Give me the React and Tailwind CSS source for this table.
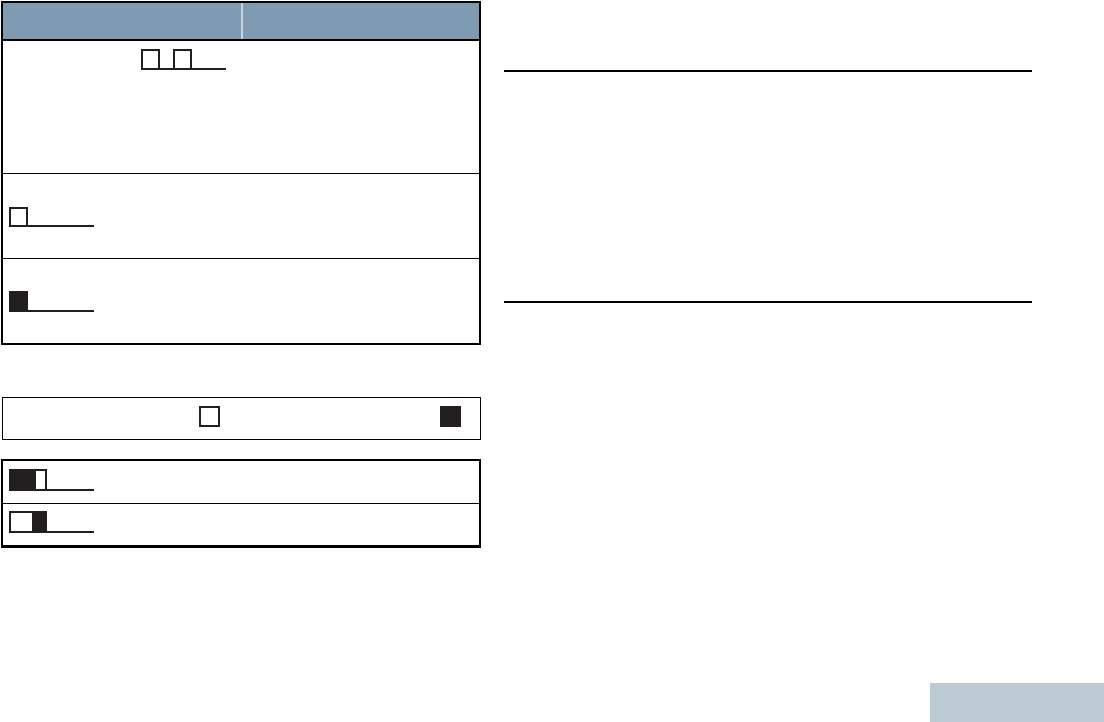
const INK = "border-[#231f20]";

const Underlined = ({ children }) => (
  <div className={`flex items-end w-[85px] border-b-2 ${INK}`}>{children}</div>
);

const Empty = ({ h = "h-[18px]" }) => (
  <div className={`w-[19px] ${h} border-2 border-b-0 ${INK}`} />
);

const Filled = () => <div className="w-[19px] h-[19px] bg-[#231f20]" />;

const Toggle = ({ on }) => (
  <div className={`flex w-[38px] h-[20px] border-2 border-b-0 ${INK} ${on ? "" : "justify-end"}`}>
    <div className={`${on ? "w-[25px]" : "w-[13px]"} h-full bg-[#231f20]`} />
  </div>
);

const App = () => {
  return (
    <div className="flex w-[1104px] h-[722px] bg-white overflow-hidden">

      {/* Left column */}
      <div className="w-[482px] pl-[1px] pt-[1px] shrink-0">

        {/* Main table */}
        <div className="w-[480px] border-2 border-black">
          <div className="flex h-[36px] bg-[#7f9ab3]">
            <div className="w-[238px]" />
            <div className="w-[2px] bg-[#c9d4df]" />
            <div className="flex-1" />
          </div>
          <div className="h-[2px] bg-black" />

          <div className="h-[133px] pl-[138px] pt-[8px] border-b border-black">
            <Underlined>
              <Empty h="h-[19px]" />
              <div className="ml-[13px]"><Empty h="h-[19px]" /></div>
            </Underlined>
          </div>

          <div className="h-[85px] pl-[6px] pt-[33px] border-b border-black">
            <Underlined>
              <Empty />
            </Underlined>
          </div>

          <div className="h-[84px] pl-[6px] pt-[32px]">
            <Underlined>
              <Filled />
            </Underlined>
          </div>
        </div>

        {/* Indicator bar */}
        <div className="mt-[52px] ml-[1px] w-[479px] h-[43px] border border-black pl-[196px] pt-[8px] flex items-start">
          <div className={`w-[21px] h-[21px] border-2 ${INK}`} />
          <div className="ml-[220px] w-[21px] h-[21px] bg-[#231f20]" />
        </div>

        {/* Toggle table */}
        <div className="mt-[19px] w-[480px] border-2 border-b-[3px] border-black">
          <div className="h-[43px] pl-[6px] pt-[8px] border-b border-black">
            <Underlined>
              <Toggle on />
            </Underlined>
          </div>
          <div className="h-[41px] pl-[6px] pt-[7px]">
            <Underlined>
              <Toggle />
            </Underlined>
          </div>
        </div>
      </div>

      {/* Right column */}
      <div className="flex-1 flex flex-col pt-[70px]">
        <div className="ml-[22px] w-[528px] h-[2px] bg-black" />
        <div className="ml-[22px] mt-[229px] w-[528px] h-[2px] bg-black" />
        <div className="mt-auto self-end w-[174px] h-[39px] bg-[#bdcad4]" />
      </div>
    </div>
  );
};

export default App;
